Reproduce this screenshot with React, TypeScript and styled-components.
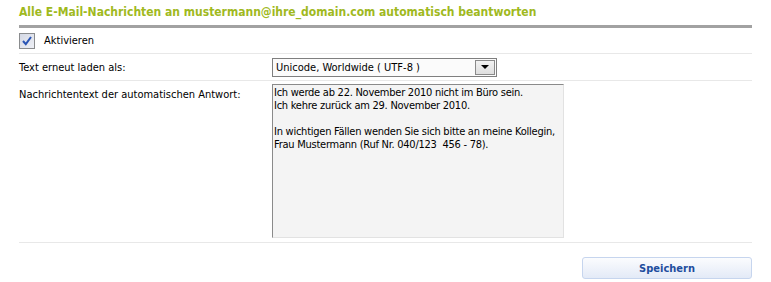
import styled, { createGlobalStyle } from "styled-components";

const GlobalStyle = createGlobalStyle`
  body {
    margin: 0;
    background: #ffffff;
    font-family: "DejaVu Sans Condensed", "Liberation Sans", sans-serif;
    font-size: 11px;
    color: #000000;
  }
`;

const Page = styled.div`
  width: 733px;
  padding: 0 0 0 19px;
`;

const Title = styled.h1`
  margin: 0;
  height: 25px;
  line-height: 24px;
  font-family: "DejaVu Sans Condensed", "Liberation Sans", sans-serif;
  font-size: 12px;
  font-weight: bold;
  color: #9fb91e;
  white-space: nowrap;
`;

const Bar = styled.div`
  height: 3px;
  background: #a2a2a2;
`;

const Row = styled.div<{ $height: number; $align?: string }>`
  display: grid;
  grid-template-columns: 253px 1fr;
  align-items: ${(p) => p.$align ?? "center"};
  height: ${(p) => p.$height}px;
  border-bottom: 1px solid #e8e8e8;
`;

const Label = styled.label<{ $top?: number }>`
  padding-top: ${(p) => p.$top ?? 0}px;
  white-space: nowrap;
`;

const CheckRow = styled.div`
  display: flex;
  align-items: center;
  gap: 9px;
  height: 25px;
  border-bottom: 1px solid #e8e8e8;
`;

const Check = styled.span`
  box-sizing: border-box;
  width: 16px;
  height: 16px;
  border: 1px solid #8a8c8e;
  background: linear-gradient(135deg, #d4d8e4 0%, #eef0f6 100%);
  display: flex;
  align-items: center;
  justify-content: center;
`;

const Select = styled.div`
  box-sizing: border-box;
  width: 225px;
  height: 19px;
  border: 1px solid #7f7f7f;
  background: #fbfbfb;
  display: flex;
  align-items: center;
  justify-content: space-between;
  padding: 0 1px 0 3px;
`;

const DropButton = styled.span`
  box-sizing: border-box;
  width: 20px;
  height: 15px;
  border: 1px solid #8a8a8a;
  background: linear-gradient(#f2f2f2, #dedede);
  display: flex;
  align-items: center;
  justify-content: center;
`;

const Triangle = styled.span`
  width: 0;
  height: 0;
  border-left: 4px solid transparent;
  border-right: 4px solid transparent;
  border-top: 4px solid #000;
`;

const TextArea = styled.div`
  box-sizing: border-box;
  width: 292px;
  height: 154px;
  margin-top: 3px;
  border-style: solid;
  border-width: 1px;
  border-color: #8a8a8a #e2e2e2 #e2e2e2 #8a8a8a;
  background: #f4f4f4;
  padding: 1px 0 0 1px;
  line-height: 13px;
  letter-spacing: -0.25px;
  white-space: pre;
`;

const Footer = styled.div`
  display: flex;
  justify-content: flex-end;
  padding-top: 14px;
`;

const SaveButton = styled.button`
  box-sizing: border-box;
  width: 170px;
  height: 22px;
  border: 1px solid #c6d5ee;
  border-radius: 3px;
  background: linear-gradient(#fbfcfe 0%, #eef2fa 55%, #e3eaf7 100%);
  font-family: "DejaVu Sans Condensed", "Liberation Sans", sans-serif;
  font-size: 11px;
  font-weight: bold;
  color: #1e4d9e;
  padding: 0;
`;

const message = `Ich werde ab 22. November 2010 nicht im Büro sein.
Ich kehre zurück am 29. November 2010.

In wichtigen Fällen wenden Sie sich bitte an meine Kollegin,
Frau Mustermann (Ruf Nr. 040/123  456 - 78).`;

export default function App() {
  return (
    <Page>
      <GlobalStyle />
      <Title>Alle E-Mail-Nachrichten an mustermann@ihre_domain.com automatisch beantworten</Title>
      <Bar />
      <CheckRow>
        <Check>
          <svg width="12" height="12" viewBox="0 0 12 12">
            <path d="M2 6 L4.8 9.2 L10 2" fill="none" stroke="#2a55b5" strokeWidth="2" />
          </svg>
        </Check>
        <span>Aktivieren</span>
      </CheckRow>
      <Row $height={26}>
        <Label>Text erneut laden als:</Label>
        <Select>
          <span>Unicode, Worldwide ( UTF-8 )</span>
          <DropButton>
            <Triangle />
          </DropButton>
        </Select>
      </Row>
      <Row $height={161} $align="start">
        <Label $top={7}>Nachrichtentext der automatischen Antwort:</Label>
        <TextArea>{message}</TextArea>
      </Row>
      <Footer>
        <SaveButton>Speichern</SaveButton>
      </Footer>
    </Page>
  );
}
